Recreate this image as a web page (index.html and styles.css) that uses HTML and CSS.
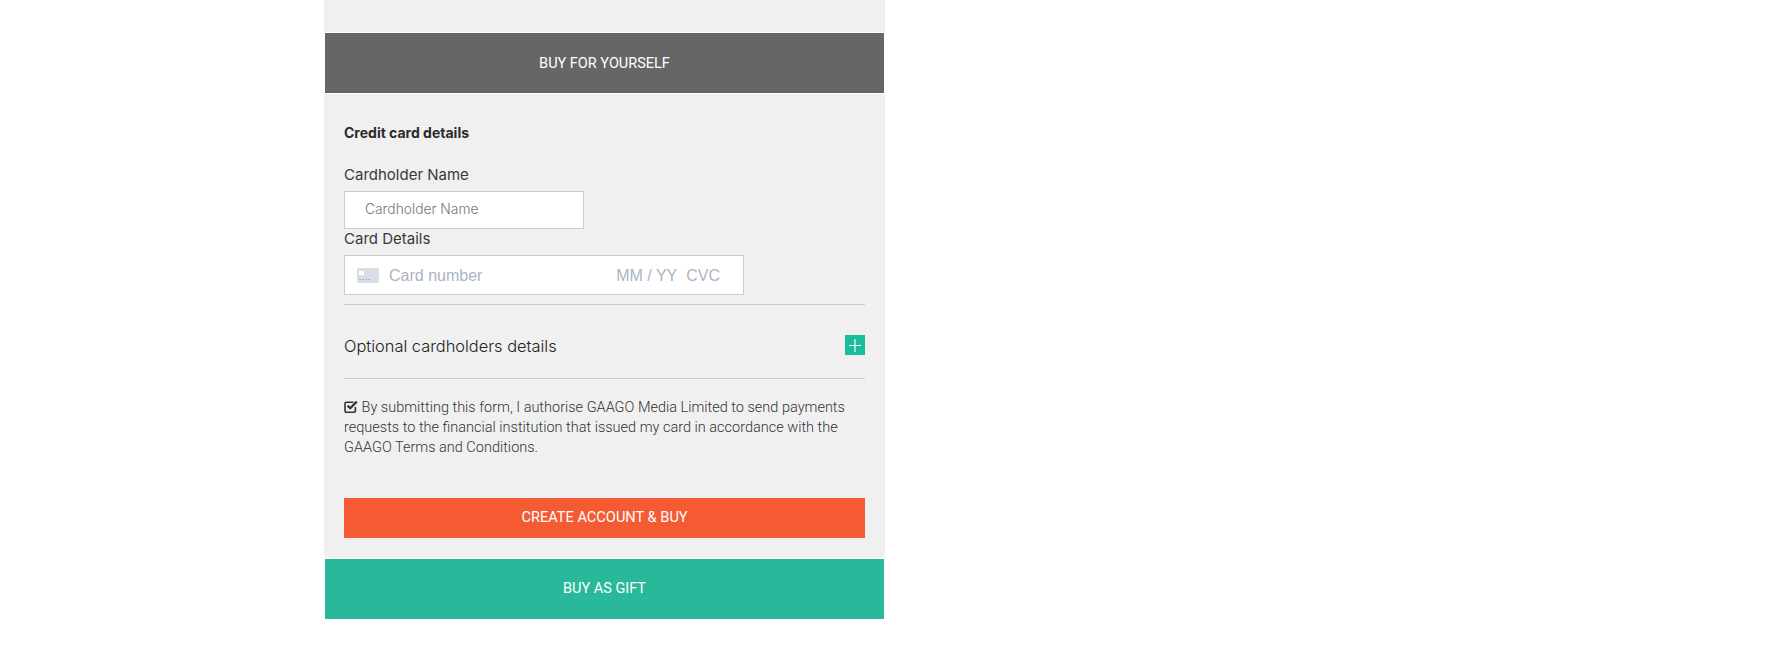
FILE: index.html
```html
<!DOCTYPE html>
<html lang="en">
<head>
    <meta charset="UTF-8">
    <title>Buy</title>
    <link rel="stylesheet" href="styles.css">
</head>
<body>
    <div class="panel">
        <div class="tab tab-dark">BUY FOR YOURSELF</div>

        <form class="details" autocomplete="off">
            <h4>Credit card details</h4>

            <label class="name-label" for="cardholder">Cardholder Name</label>
            <input type="text" id="cardholder" placeholder="Cardholder Name">

            <label class="card-label">Card Details</label>
            <div class="card-box">
                <svg class="card-icon" width="22" height="15" viewBox="0 0 22 15">
                    <rect width="22" height="15" rx="1.5" fill="#d9dde6"/>
                    <rect x="2" y="3" width="5" height="4" fill="#fff"/>
                    <path d="M2 11.5h12" stroke="#aab3c2" stroke-width="1" stroke-dasharray="2 1"/>
                </svg>
                <span class="card-number">Card number</span>
                <span class="card-date">MM / YY</span>
                <span class="card-cvc">CVC</span>
            </div>

            <div class="optional">
                <span class="optional-title">Optional cardholders details</span>
                <span class="plus">
                    <svg width="20" height="20" viewBox="0 0 20 20">
                        <path d="M10 4v13" stroke="#9be3d2" stroke-width="2"/>
                        <path d="M4 10.5h12" stroke="#fff" stroke-width="1"/>
                    </svg>
                </span>
            </div>

            <p class="terms">
                <svg class="check" width="14" height="13" viewBox="0 0 14 13">
                    <path d="M9.5 2.2H2.6A1.6 1.6 0 0 0 1 3.8v6.9a1.6 1.6 0 0 0 1.6 1.6h7.2a1.6 1.6 0 0 0 1.6-1.6V7" fill="none" stroke="#333" stroke-width="1.6"/>
                    <path d="M3.6 5.6l2.6 2.6 6.6-6.6" fill="none" stroke="#333" stroke-width="2.2"/>
                </svg>
                By submitting this form, I authorise GAAGO Media Limited to send payments requests to the financial institution that issued my card in accordance with the GAAGO Terms and Conditions.
            </p>

            <button type="button">CREATE ACCOUNT &amp; BUY</button>
        </form>

        <div class="tab tab-green">BUY AS GIFT</div>
    </div>
</body>
</html>
```

FILE: styles.css
```css
body {
    font-family: 'Roboto', sans-serif;
    background-color: #fff;
    color: #333;
    margin: 0;
    padding: 0 0 0 324px;
}

.panel {
    width: 561px;
    padding-top: 33px;
    background-color: #f0f0f0;
}

.tab {
    height: 60px;
    margin: 0 1px;
    display: flex;
    justify-content: center;
    align-items: center;
    color: #fff;
    font-size: 14.5px;
    box-shadow: 0 0 0 1px #fff;
}

.tab-dark {
    background-color: #666;
}

.tab-green {
    background-color: #29b99a;
    padding-bottom: 2px;
    box-sizing: border-box;
}

.details {
    padding: 0 20px 21px;
    display: flex;
    flex-direction: column;
}

h4 {
    margin: 32px 0 0;
    font-family: 'Inter', sans-serif;
    font-size: 14px;
    line-height: 16px;
    font-weight: 700;
    color: #2b2b2b;
}

label {
    font-family: 'Inter', sans-serif;
    font-size: 15px;
    font-weight: 400;
    line-height: 18px;
    color: #3a3a3a;
}

.name-label {
    margin-top: 25px;
}

input {
    box-sizing: border-box;
    width: 240px;
    height: 38px;
    margin-top: 7px;
    padding: 0 20px 3px;
    border: 1px solid #ccc;
    background-color: #fff;
    outline: none;
    font-family: 'Inter', sans-serif;
    font-size: 13.8px;
    font-weight: 300;
}

input::placeholder {
    color: #777;
    opacity: 1;
}

.card-label {
    margin-top: 1px;
}

.card-box {
    box-sizing: border-box;
    width: 400px;
    height: 40px;
    margin-top: 7px;
    padding: 1px 23px 0 12px;
    border: 1px solid #ccc;
    background-color: #fff;
    display: flex;
    align-items: center;
    font-family: 'Liberation Sans', Arial, sans-serif;
    font-size: 16px;
    color: #aab4c3;
}

.card-icon {
    margin-top: -1px;
}

.card-number {
    margin-left: 10px;
    flex: 1;
}

.card-cvc {
    margin-left: 9px;
}

.optional {
    box-sizing: border-box;
    margin-top: 9px;
    height: 75px;
    padding-top: 6px;
    border-top: 1px solid #ccc;
    border-bottom: 1px solid #ccc;
    display: flex;
    justify-content: space-between;
    align-items: center;
    font-family: 'Inter', sans-serif;
    font-size: 16.4px;
    font-weight: 300;
    color: #222;
}

.optional-title {
    margin-top: 3px;
}

.plus {
    display: flex;
    width: 20px;
    height: 20px;
    background-color: #1abc9c;
}

.terms {
    margin: 19px 0 0;
    font-size: 14.5px;
    line-height: 20px;
    font-weight: 300;
    color: #333;
}

.check {
    vertical-align: -1px;
}

button {
    height: 40px;
    margin-top: 40px;
    border: none;
    padding: 0 0 2px;
    background-color: #f55b33;
    color: #fff;
    font-family: 'Roboto', sans-serif;
    font-size: 14.6px;
    cursor: pointer;
}
```
